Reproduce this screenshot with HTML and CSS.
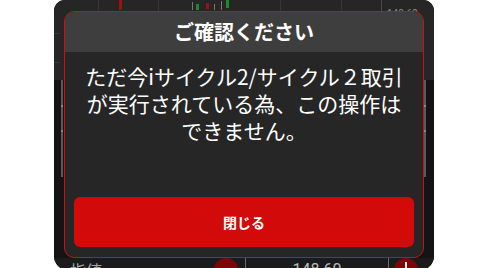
FILE: index.html
```html
<!DOCTYPE html>
<html lang="ja">
<head>
<meta charset="utf-8">
<title>ご確認ください</title>
<link rel="stylesheet" href="styles.css">
</head>
<body>
<div class="panel">
  <div class="chart">
    <svg class="chart-svg" width="380" height="80" viewBox="0 0 380 80">
      <g stroke="#363636" stroke-width="1">
        <line x1="44.5" y1="0" x2="44.5" y2="80"/>
        <line x1="104.5" y1="0" x2="104.5" y2="80"/>
        <line x1="226.5" y1="0" x2="226.5" y2="80"/>
        <line x1="287.5" y1="0" x2="287.5" y2="80"/>
        <line x1="0" y1="33.5" x2="6" y2="33.5"/>
        <line x1="0" y1="62.5" x2="6" y2="62.5"/>
      </g>
      <line x1="327.5" y1="0" x2="327.5" y2="80" stroke="#4a4a4a"/>
      <rect x="65" y="0" width="3" height="10" fill="#a01010"/>
      <line x1="138.5" y1="2" x2="138.5" y2="10" stroke="#777"/>
      <rect x="142" y="4" width="3" height="6" fill="#1d8a2a"/>
      <rect x="152" y="3" width="3" height="6" fill="#a01010"/>
      <line x1="160.5" y1="4" x2="160.5" y2="10" stroke="#777"/>
      <line x1="167.5" y1="1" x2="167.5" y2="10" stroke="#777"/>
      <rect x="172" y="0" width="3" height="8" fill="#1d8a2a"/>
      <text x="333" y="17" class="axis-label">148.60</text>
    </svg>
  </div>
  <div class="list">
    <span class="scrollbar"></span>
    <span class="scrollbar"></span>
  </div>
  <div class="order-row">
    <span class="row-label">指値</span>
    <span class="step step-minus"></span>
    <span class="divider"></span>
    <span class="price">148.60</span>
    <span class="divider"></span>
    <span class="step step-plus"></span>
  </div>

  <div class="modal" role="dialog">
    <div class="modal-header">ご確認ください</div>
    <div class="modal-body">
      <p class="message">ただ今iサイクル2/サイクル２取引<br>が実行されている為、この操作は<br>できません。</p>
      <button class="close-btn" type="button">閉じる</button>
    </div>
  </div>
</div>
</body>
</html>
```

FILE: styles.css
```css
html, body {
  margin: 0;
  padding: 0;
  background: #ffffff;
  overflow: hidden;
}

body {
  font-family: "Noto Sans CJK JP", "Noto Sans", sans-serif;
}

.panel {
  position: relative;
  width: 380px;
  height: 270px;
  margin: 0 auto;
  background: #1b1b1b;
  border-radius: 11px 11px 14px 14px;
  overflow: hidden;
}

.chart {
  height: 80px;
  background: #262626;
}

.chart-svg {
  display: block;
}

.axis-label {
  font-family: Roboto, "Noto Sans", sans-serif;
  font-size: 10px;
  fill: #8a8a8a;
}

.list {
  height: 178px;
  background: #141414;
  display: flex;
  justify-content: space-between;
  padding: 0 8px 0 7px;
}

.scrollbar {
  width: 2px;
  height: 97px;
  background: linear-gradient(#5a5a5a 0 25px, #888 25px 27px, #5a5a5a 27px 50px, #888 50px 52px, #5a5a5a 52px);
}

.order-row {
  height: 30px;
  display: flex;
  align-items: flex-start;
  background: #1b1b1b;
}

.row-label {
  width: 160px;
  box-sizing: border-box;
  padding: 1px 0 0 16px;
  font-size: 16px;
  line-height: 22px;
  color: #a8a8a8;
}

.step {
  position: relative;
  width: 24px;
  height: 24px;
  border-radius: 50%;
  background: #7e0606;
  flex: none;
}

.step-minus {
  margin-right: 7px;
}

.step-plus {
  margin-left: 5px;
}

.step-plus::before {
  content: "";
  position: absolute;
  left: 11px;
  top: 4px;
  width: 2px;
  height: 16px;
  background: #e8e8e8;
}

.step-plus::after,
.step-minus::after {
  content: "";
  position: absolute;
  left: 4px;
  top: 11px;
  width: 16px;
  height: 2px;
  background: #e8e8e8;
}

.divider {
  width: 1px;
  height: 30px;
  background: #6a6a6a;
  flex: none;
}

.price {
  width: 142px;
  text-align: center;
  font-family: Roboto, "Noto Sans", sans-serif;
  font-size: 16px;
  line-height: 22px;
  padding-top: 1px;
  color: #b8b8b8;
}

.modal {
  position: absolute;
  left: 10px;
  top: 11px;
  width: 360px;
  height: 247px;
  box-sizing: border-box;
  border: 1px solid #c8101a;
  border-radius: 10px;
  background: #262626;
  overflow: hidden;
  display: flex;
  flex-direction: column;
}

.modal-header {
  height: 40px;
  flex: none;
  background: #3e3e3e;
  display: flex;
  align-items: center;
  justify-content: center;
  color: #ffffff;
  font-size: 20px;
  font-weight: bold;
  padding-bottom: 1px;
  box-sizing: border-box;
}

.modal-body {
  flex: 1;
  display: flex;
  flex-direction: column;
  padding: 11px 9px 10px;
}

.message {
  margin: 0;
  text-align: center;
  color: #ffffff;
  font-size: 21px;
  line-height: 27px;
}

.close-btn {
  margin-top: auto;
  height: 50px;
  border: none;
  border-radius: 6px;
  background: #d20a0a;
  color: #ffffff;
  font-family: "Noto Sans CJK JP", "Noto Sans", sans-serif;
  font-size: 14px;
  font-weight: bold;
  padding: 0;
}
```
